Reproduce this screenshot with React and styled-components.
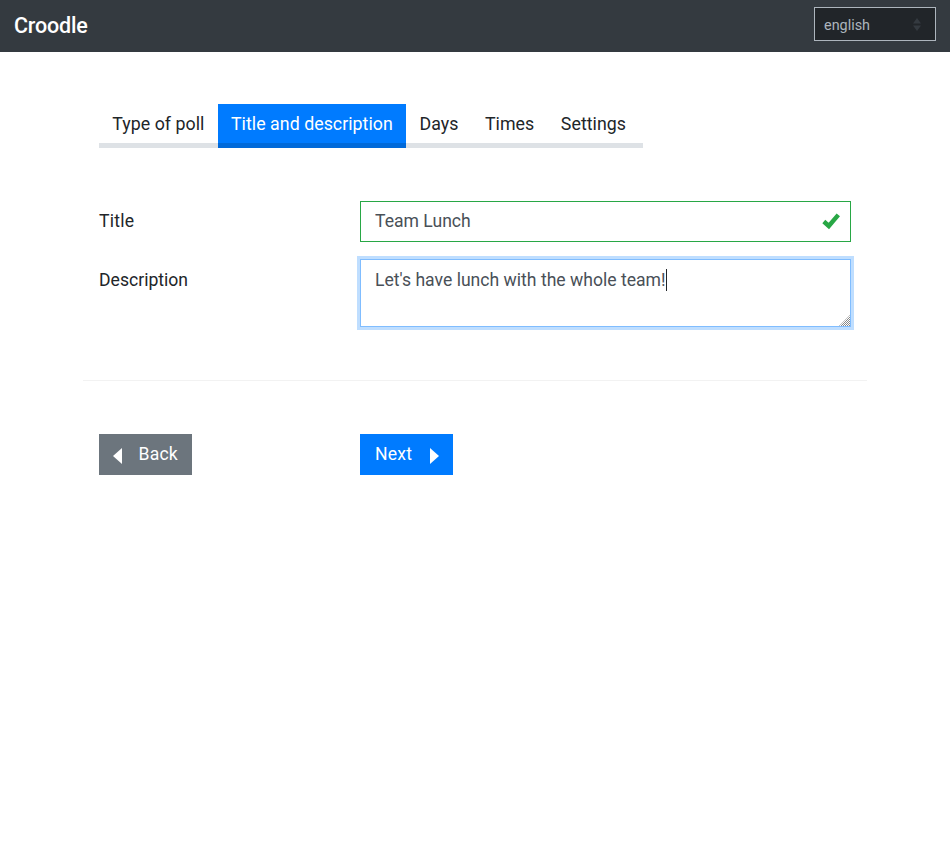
import React, { useEffect, useRef } from "react";
import styled, { createGlobalStyle } from "styled-components";

const Global = createGlobalStyle`
  html, body { margin: 0; padding: 0; background: #fff; }
  body { font-family: Roboto, "Liberation Sans", sans-serif; font-size: 17.6px; line-height: 1.5; color: #212529; }
  * { box-sizing: border-box; }
`;

const Header = styled.header`
  height: 52px;
  background: #343a40;
  display: flex;
  align-items: flex-start;
  justify-content: space-between;
  padding: 7px 14px 0;
`;
const Brand = styled.a`
  color: #fff;
  font-size: 21.5px;
  font-weight: 500;
  letter-spacing: -0.2px;
  line-height: 37px;
`;
const LangSelect = styled.select`
  appearance: none;
  width: 122px;
  height: 34px;
  padding: 2px 10px 0 9px;
  background-color: #212529;
  background-image: url("data:image/svg+xml,%3Csvg xmlns='http://www.w3.org/2000/svg' width='8' height='13'%3E%3Cpath d='M4 0l4 5.5H0zM4 13L0 7.5h8z' fill='%23343a40'/%3E%3C/svg%3E");
  background-repeat: no-repeat;
  background-position: right 14px center;
  border: 1px solid #adb5bd;
  border-radius: 0;
  color: #adb5bd;
  font: 400 14.4px Roboto, sans-serif;
`;
const Main = styled.main`
  width: 784px;
  margin: 0 0 0 83px;
  padding: 52px 16px 0;
`;
const Tabs = styled.nav`
  display: flex;
  width: 544px;
  border-bottom: 5px solid #dee2e6;
`;
const Tab = styled.a`
  display: block;
  flex: none;
  height: 44px;
  margin-bottom: -5px;
  padding: 7px 13.3px 0;
  font-size: 17.8px;
  letter-spacing: 0.03px;
  white-space: nowrap;
  color: ${(p) => (p.$active ? "#fff" : "#212529")};
  background: ${(p) => (p.$active ? "#007bff" : "transparent")};
  border-bottom: 5px solid ${(p) => (p.$active ? "#0069d9" : "transparent")};
`;
const Form = styled.form`
  margin-top: 53px;
`;
const Row = styled.div`
  display: grid;
  grid-template-columns: 261px 491px;
  margin-bottom: 17px;
`;
const Label = styled.label`
  padding-top: ${(p) => p.$top}px;
  letter-spacing: ${(p) => p.$tracking || 0}px;
`;
const InputWrap = styled.div`
  position: relative;
`;
const TextInput = styled.input`
  display: block;
  width: 100%;
  height: 41px;
  padding: 0 40px 2px 14px;
  border: 1px solid #28a745;
  border-radius: 0;
  outline: 0;
  font: inherit;
  color: #495057;
`;
const Check = styled.svg`
  position: absolute;
  right: 10px;
  top: 11px;
  width: 20px;
  height: 18px;
`;
const TextArea = styled.textarea`
  display: block;
  width: 100%;
  height: 68px;
  padding: 7px 14px;
  border: 1px solid #80bdff;
  border-radius: 0;
  outline: 0;
  box-shadow: 0 0 0 3px rgba(0, 123, 255, 0.25);
  font: inherit;
  color: #495057;
  resize: vertical;
  &::-webkit-resizer {
    background-image: url("data:image/svg+xml,%3Csvg xmlns='http://www.w3.org/2000/svg' width='15' height='15'%3E%3Cdefs%3E%3Cpattern id='h' width='2' height='2' patternUnits='userSpaceOnUse'%3E%3Crect width='1' height='1' fill='%23888'/%3E%3Crect x='1' y='1' width='1' height='1' fill='%23888'/%3E%3C/pattern%3E%3C/defs%3E%3Cpath d='M4 15L15 4v11z' fill='url(%23h)'/%3E%3C/svg%3E");
    background-repeat: no-repeat;
    background-position: right bottom;
  }
`;
const Caret = styled.span`
  position: absolute;
  left: 306px;
  top: 10px;
  width: 1px;
  height: 22px;
  background: #212529;
`;
const Divider = styled.hr`
  width: 784px;
  margin: 53px 0 53px -16px;
  border: 0;
  border-top: 1px solid rgba(0, 0, 0, 0.05);
`;
const Actions = styled.div`
  display: grid;
  grid-template-columns: 261px auto;
  justify-items: start;
`;
const Button = styled.button`
  display: flex;
  align-items: center;
  justify-content: space-between;
  width: 93px;
  height: 41px;
  padding: 0 14px 1px ${(p) => (p.$secondary ? 14 : 15)}px;
  border: 0;
  border-radius: 0;
  color: #fff;
  font: inherit;
  letter-spacing: 0.2px;
  background: ${(p) => (p.$secondary ? "#6c757d" : "#007bff")};
`;
const Arrow = styled.svg`
  width: 9px;
  height: 16px;
  margin-top: 3px;
  fill: #fff;
`;

const tabs = ["Type of poll", "Title and description", "Days", "Times", "Settings"];

export default function App() {
  const ref = useRef(null);
  useEffect(() => {
    const el = ref.current;
    el.focus();
    el.setSelectionRange(el.value.length, el.value.length);
  }, []);
  return (
    <>
      <Global />
      <Header>
        <Brand>Croodle</Brand>
        <LangSelect defaultValue="en">
          <option value="en">english</option>
        </LangSelect>
      </Header>
      <Main>
        <Tabs>
          {tabs.map((t) => (
            <Tab key={t} $active={t === "Title and description"}>{t}</Tab>
          ))}
        </Tabs>
        <Form>
          <Row>
            <Label $top={7} $tracking={0.25}>Title</Label>
            <InputWrap>
              <TextInput defaultValue="Team Lunch" />
              <Check viewBox="0 0 20 18">
                <path d="M2.8 9.5 L7.8 14 L17.3 2.8" fill="none" stroke="#28a745" strokeWidth="4.4" />
              </Check>
            </InputWrap>
          </Row>
          <Row>
            <Label $top={8}>Description</Label>
            <InputWrap>
              <TextArea ref={ref} defaultValue="Let's have lunch with the whole team!" />
              <Caret />
            </InputWrap>
          </Row>
          <Divider />
          <Actions>
            <Button type="button" $secondary>
              <Arrow viewBox="0 0 9 16"><path d="M9 0v16L0 8z" /></Arrow>
              Back
            </Button>
            <Button type="button">
              Next
              <Arrow viewBox="0 0 9 16"><path d="M0 0v16l9-8z" /></Arrow>
            </Button>
          </Actions>
        </Form>
      </Main>
    </>
  );
}
